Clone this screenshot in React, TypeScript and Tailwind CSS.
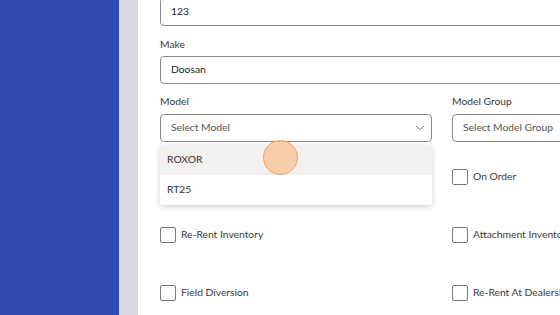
import { ChevronDown } from 'lucide-react';

function Checkbox({ label }: { label: string }) {
  return (
    <div className="flex items-center gap-[5px] h-[16px]">
      <div className="w-[16px] h-[16px] border border-[#7a7a7a] rounded-[2px] bg-white shrink-0"></div>
      <span className="text-[10.3px] text-[#3a3a3a] whitespace-nowrap">{label}</span>
    </div>
  );
}

export default function App() {
  return (
    <div className="relative flex h-[315px] w-[560px] overflow-hidden bg-white" style={{ fontFamily: 'Lato, "Open Sans", sans-serif' }}>
      <div className="w-[119px] shrink-0 bg-[#334ab5]"></div>
      <div className="w-[19px] shrink-0 bg-[#d9d8e6]"></div>

      <div className="flex-1 pl-[22px] overflow-hidden">
        <div className="w-[600px] -mt-[2px]">
          {/* Serial */}
          <div className="h-[28px] border border-[#8a8a8a] rounded-[4px] flex items-center px-[10px] text-[10.3px] text-[#222]">123</div>

          <div className="h-[30px] pt-[11px] text-[10.3px] text-[#3a3a3a] leading-[14px]">Make</div>
          <div className="h-[28px] border border-[#8a8a8a] rounded-[4px] flex items-center px-[10px] text-[10.3px] text-[#222]">Doosan</div>

          <div className="flex gap-[20px]">
            <div className="w-[272px] relative">
              <div className="h-[30px] pt-[10px] text-[10.3px] text-[#3a3a3a] leading-[14px]">Model</div>
              <div className="h-[28px] border border-[#8a8a8a] rounded-[4px] flex items-center justify-between pl-[10px] pr-[4px] text-[10.3px] text-[#555]">
                <span>Select Model</span>
                <ChevronDown className="w-[14px] h-[14px] text-[#555]" strokeWidth={1.5} />
              </div>

              <div className="flex flex-col gap-[42px] mt-[27px]">
                <Checkbox label="" />
                <Checkbox label="Re-Rent Inventory" />
                <Checkbox label="Field Diversion" />
              </div>

              {/* dropdown */}
              <div className="absolute left-0 top-[61px] w-[272px] bg-white rounded-[3px] shadow-[0_2px_6px_rgba(0,0,0,0.18)] overflow-hidden">
                <div className="h-[30px] flex items-center px-[7px] bg-[#f2f1f0] text-[10.3px] text-[#333]">ROXOR</div>
                <div className="h-[30px] flex items-center px-[7px] text-[10.3px] text-[#333]">RT25</div>
              </div>
            </div>

            <div className="w-[272px]">
              <div className="h-[30px] pt-[10px] text-[10.3px] text-[#3a3a3a] leading-[14px]">Model Group</div>
              <div className="h-[28px] border border-[#8a8a8a] rounded-[4px] flex items-center px-[10px] text-[10.3px] text-[#555] whitespace-nowrap">Select Model Group</div>

              <div className="flex flex-col gap-[42px] mt-[27px]">
                <Checkbox label="On Order" />
                <Checkbox label="Attachment Inventory" />
                <Checkbox label="Re-Rent At Dealership" />
              </div>
            </div>
          </div>
        </div>
      </div>

      {/* click indicator */}
      <div className="absolute left-[263px] top-[140px] w-[35px] h-[35px] rounded-full bg-[#f7c49a]/80 border-[1.5px] border-[#f5a35c]"></div>
    </div>
  );
}
